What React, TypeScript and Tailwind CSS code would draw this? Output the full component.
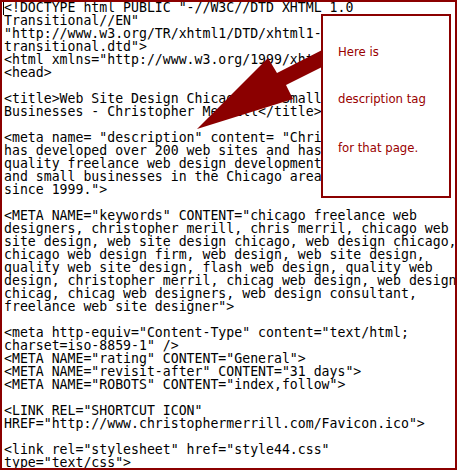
const lines = [
  '<!DOCTYPE html PUBLIC "-//W3C//DTD XHTML 1.0',
  'Transitional//EN"',
  '"http://www.w3.org/TR/xhtml1/DTD/xhtml1-',
  'transitional.dtd">',
  '<html xmlns="http://www.w3.org/1999/xhtml">',
  "<head>",
  "",
  "<title>Web Site Design Chicago for Small",
  "Businesses - Christopher Merrill</title>",
  "",
  '<meta name= "description" content= "Christopher Merrill',
  "has developed over 200 web sites and has provided",
  "quality freelance web design development for large",
  "and small businesses in the Chicago area",
  'since 1999.">',
  "",
  '<META NAME="keywords" CONTENT="chicago freelance web',
  "designers, christopher merill, chris merril, chicago web",
  "site design, web site design chicago, web design chicago,",
  "chicago web design firm, web design, web site design,",
  "quality web site design, flash web design, quality web",
  "design, christopher merril, chicag web design, web design",
  "chicag, chicag web designers, web design consultant,",
  'freelance web site designer">',
  "",
  '<meta http-equiv="Content-Type" content="text/html;',
  'charset=iso-8859-1" />',
  '<META NAME="rating" CONTENT="General">',
  '<META NAME="revisit-after" CONTENT="31 days">',
  '<META NAME="ROBOTS" CONTENT="index,follow">',
  "",
  '<LINK REL="SHORTCUT ICON"',
  'HREF="http://www.christophermerrill.com/Favicon.ico">',
  "",
  '<link rel="stylesheet" href="style44.css"',
  'type="text/css">',
];

const App = () => {
  return (
    <div className="w-[457px] h-[472px] bg-white">
      <div className="relative w-[457px] h-[470px] border-2 border-[#8b0000] overflow-hidden">
        {/* source listing */}
        <div className="pl-[2px] -mt-px font-['DejaVu_Sans_Mono',monospace] text-[13.2px] leading-[13px] text-black whitespace-pre">
          {lines.map((line, i) => (
            <div key={i} className="h-[13px]">
              {line}
            </div>
          ))}
        </div>

        {/* text cursor */}
        <div className="absolute left-[1px] top-0 w-px h-[13px] bg-black" />

        {/* arrow */}
        <svg className="absolute left-[-2px] top-[-2px]" width="457" height="470" viewBox="0 0 457 470">
          <polygon points="197,129 268,58 277,73 330,46 330,63 286,85 293,99" fill="#8b0000" />
        </svg>

        {/* callout */}
        <div className="absolute left-[319px] top-[12px] w-[130px] h-[184px] bg-white border-2 border-[#8b0000] pl-[15px] pt-[29px] flex flex-col gap-[33px] font-['DejaVu_Sans',sans-serif] text-[11.7px] leading-[14px] text-[#990000]">
          <p>Here is</p>
          <p>description tag</p>
          <p className="mt-[2px]">for that page.</p>
        </div>
      </div>
    </div>
  );
};

export default App;
